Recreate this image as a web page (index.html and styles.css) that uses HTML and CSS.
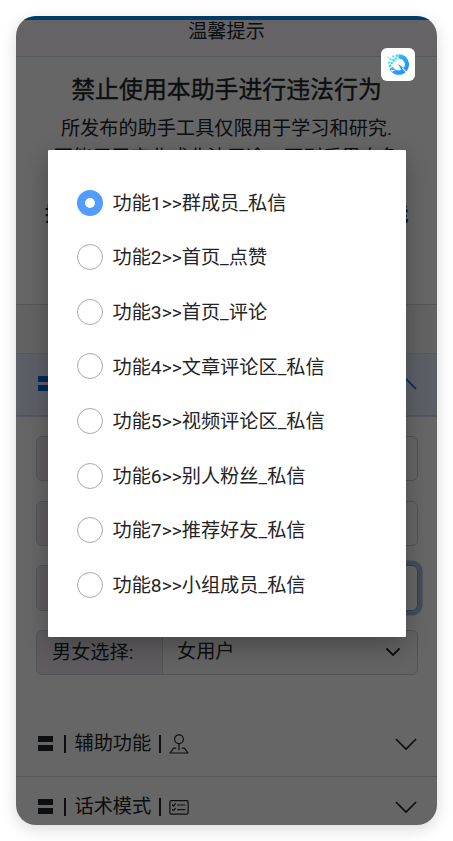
FILE: index.html
```html
<!DOCTYPE html>
<html lang="zh-CN">
<head>
<meta charset="utf-8">
<title>温馨提示</title>
<link rel="stylesheet" href="styles.css">
</head>
<body>
<div class="phone">
  <main class="page">
    <div class="status"></div>
    <header class="card-head">温馨提示</header>
    <section class="notice">
      <h1>禁止使用本助手进行违法行为</h1>
      <p>所发布的助手工具仅限用于学习和研究.</p>
      <p>不能用于商业或非法用途，否则后果自负</p>
      <p class="edges"><b>提</b><b>能</b></p>
    </section>
    <div class="strip"></div>
    <div class="acc acc-open">
      <span class="bars"></span>
      <svg class="chev" viewBox="0 0 16 16"><path d="M1.6 11 8 4.6 14.4 11"/></svg>
    </div>
    <div class="fields">
      <div class="field"><span class="label"></span><span class="value"></span></div>
      <div class="field"><span class="label"></span><span class="value"></span></div>
      <div class="field"><span class="label"></span><span class="value focus"></span></div>
      <div class="field"><span class="label">男女选择:</span><span class="value select">女用户
        <svg class="arrow" viewBox="0 0 16 16"><path d="m2 5 6 6 6-6"/></svg></span></div>
    </div>
    <div class="acc first">
      <span class="bars"></span><i class="sep"></i><span class="name">辅助功能</span><i class="sep strong"></i>
      <svg class="icon" viewBox="0 0 20 20"><circle cx="10" cy="5.2" r="4.4"/><path d="M10 9.6v6.2M6.8 14.2H4.6L1 19h18l-3.6-4.8h-2.2"/></svg>
      <svg class="chev" viewBox="0 0 16 16"><path d="M1.6 5 8 11.4 14.4 5"/></svg>
    </div>
    <div class="acc">
      <span class="bars"></span><i class="sep"></i><span class="name">话术模式</span><i class="sep strong"></i>
      <svg class="icon" viewBox="0 0 20 20"><rect x=".9" y="3.6" width="18.2" height="13.6" rx="1.4"/><path d="M8.5 8H16M8.5 12.6H16M3.5 8l1 1 2-2.3M3.5 12.6l1 1 2-2.3"/></svg>
      <svg class="chev" viewBox="0 0 16 16"><path d="M1.6 5 8 11.4 14.4 5"/></svg>
    </div>
  </main>
  <div class="overlay">
    <div class="dialog">
      <label class="option"><span class="radio on"></span><span class="text">功能1&gt;&gt;群成员_私信</span></label>
      <label class="option"><span class="radio"></span><span class="text">功能2&gt;&gt;首页_点赞</span></label>
      <label class="option"><span class="radio"></span><span class="text">功能3&gt;&gt;首页_评论</span></label>
      <label class="option"><span class="radio"></span><span class="text">功能4&gt;&gt;文章评论区_私信</span></label>
      <label class="option"><span class="radio"></span><span class="text">功能5&gt;&gt;视频评论区_私信</span></label>
      <label class="option"><span class="radio"></span><span class="text">功能6&gt;&gt;别人粉丝_私信</span></label>
      <label class="option"><span class="radio"></span><span class="text">功能7&gt;&gt;推荐好友_私信</span></label>
      <label class="option"><span class="radio"></span><span class="text">功能8&gt;&gt;小组成员_私信</span></label>
    </div>
  </div>
  <div class="floater">
    <svg viewBox="0 0 24 24">
      <defs><linearGradient id="ring" x1="0" y1="0" x2="1" y2="1"><stop offset="0" stop-color="#35dcf2"/><stop offset=".5" stop-color="#2aa5fa"/><stop offset="1" stop-color="#168bff"/></linearGradient></defs>
      <path fill="url(#ring)" d="M12 1.2A10.8 10.8 0 1 1 2.4 16.5l3.8-2a6.4 6.4 0 0 0 8.6 3l-3.3-6 6 4A6 6 0 0 0 12 6z"/>
      <path fill="#fff" d="m15.2 15.5 5 5.5.8-.7-4.7-5.2zM4 17.4l5 .6-4 1.6z"/>
      <g fill="#35dcf2"><path d="M9 1.6h2.4V4H9zM5.6 2.6h2v2h-2zM8 4.6h2.4V7H8zM2.6 5.6h2v2h-2zM5.4 6.4h2.4v2.4H5.4zM1 9h2v2H1zM3.8 9.3h2.2v2.2H3.8zM.8 3.8H2V5H.8zM1.8 12h2.6v2.6H1.8zM7.8 8h1.2v1.2H7.8z"/></g>
    </svg>
  </div>
</div>
</body>
</html>
```

FILE: styles.css
```css
* { box-sizing: border-box; }
body {
  margin: 0;
  padding: 16px;
  background: #fff;
  font: 19.2px/28.8px Roboto, "Noto Sans CJK SC", sans-serif;
  color: #212529;
}
.phone {
  position: relative;
  width: 421px;
  height: 809px;
  border-radius: 20px;
  overflow: hidden;
}
body::before {
  content: "";
  position: absolute;
  top: 16px;
  left: 16px;
  width: 421px;
  height: 809px;
  border-radius: 20px;
  box-shadow: 0 4px 16px rgba(0, 0, 0, .15);
}
.page { background: #fff; height: 809px; }
.status { height: 4px; background: #0096ff; }
.card-head {
  height: 37px;
  line-height: 23px;
  text-align: center;
  background: #fcf8fc;
  border-bottom: 1px solid #dadce2;
}
.notice { height: 248px; padding-top: 17px; text-align: center; border-bottom: 1px solid #d8d8dc; }
.notice h1 {
  margin: 0 0 9px;
  font-size: 23.9px;
  line-height: 32px;
  font-weight: 400;
  -webkit-text-stroke: .35px currentColor;
}
.notice p { margin: 0; height: 28.8px; white-space: nowrap; }
.notice .edges { display: flex; justify-content: space-between; margin: 28.8px 28.5px 0 29px; }
.strip { height: 49px; background: #faf7fa; border-bottom: 1px solid #e4dfd8; }
.acc {
  display: flex;
  align-items: center;
  height: 63px;
  padding: 0 20px 2px 22px;
  border-top: 1px solid #d8d8d8;
}
.acc.first { border-top-color: transparent; }
.acc-open { color: #0c63e4; background: #e7f1ff; border-top: 0; border-bottom: 2px solid #cfd8e5; }
.bars {
  width: 15px;
  height: 15px;
  margin-bottom: 1px;
  background: linear-gradient(currentColor 38%, transparent 38% 62%, currentColor 62%);
}
.sep { width: 1.5px; height: 18px; margin: 0 9px 0 11px; background: #212529; }
.sep.strong { width: 2px; margin: 0 8px; }
.name { line-height: 28px; }
svg { fill: none; stroke: currentColor; stroke-linecap: round; stroke-linejoin: round; }
.icon { width: 20px; height: 20px; stroke-width: 1.2; }
.chev { width: 24px; height: 24px; margin-left: auto; margin-right: -1px; stroke-width: 1.1; }
.fields { height: 296px; padding: 19px 19px 0 20px; display: flex; flex-direction: column; gap: 19.2px; }
.field { display: flex; height: 45.4px; flex: none; }
.label {
  width: 127px;
  padding-left: 15px;
  line-height: 43px;
  background: #ece7ee;
  border: 1px solid #ced0d8;
  border-radius: 6px 0 0 6px;
}
.value { flex: 1; margin-left: -1px; border: 1px solid #ced0d8; border-radius: 0 6px 6px 0; }
.focus { border-color: #6f9fe6; box-shadow: 0 0 0 4.5px #a9bddd; }
.select { display: flex; align-items: center; justify-content: space-between; padding: 0 16px 0 14px; background: #faf7fa; }
.arrow { width: 16px; height: 16px; stroke-width: 1.8; }
.overlay {
  position: absolute;
  inset: 0;
  padding: 134.4px 31px 0 32px;
  background: rgba(0, 0, 0, .6);
}
.dialog {
  height: 486.4px;
  padding: 25px 29px;
  background: #fff;
  border-radius: 1px;
  box-shadow: 0 8px 24px rgba(0, 0, 0, .28);
}
.option { display: flex; align-items: center; gap: 9.5px; height: 54.6px; color: #242426; white-space: nowrap; }
.text { padding-top: 3px; }
.radio { width: 26px; height: 26px; border: 1px solid #aaa; border-radius: 50%; }
.radio.on { border: 8px solid #529bff; }
.floater {
  position: absolute;
  top: 32px;
  left: 365px;
  display: flex;
  align-items: center;
  justify-content: center;
  width: 34px;
  height: 33px;
  border-radius: 6px;
  background: #fff;
}
.floater svg { width: 23px; height: 23px; stroke: none; }
```
